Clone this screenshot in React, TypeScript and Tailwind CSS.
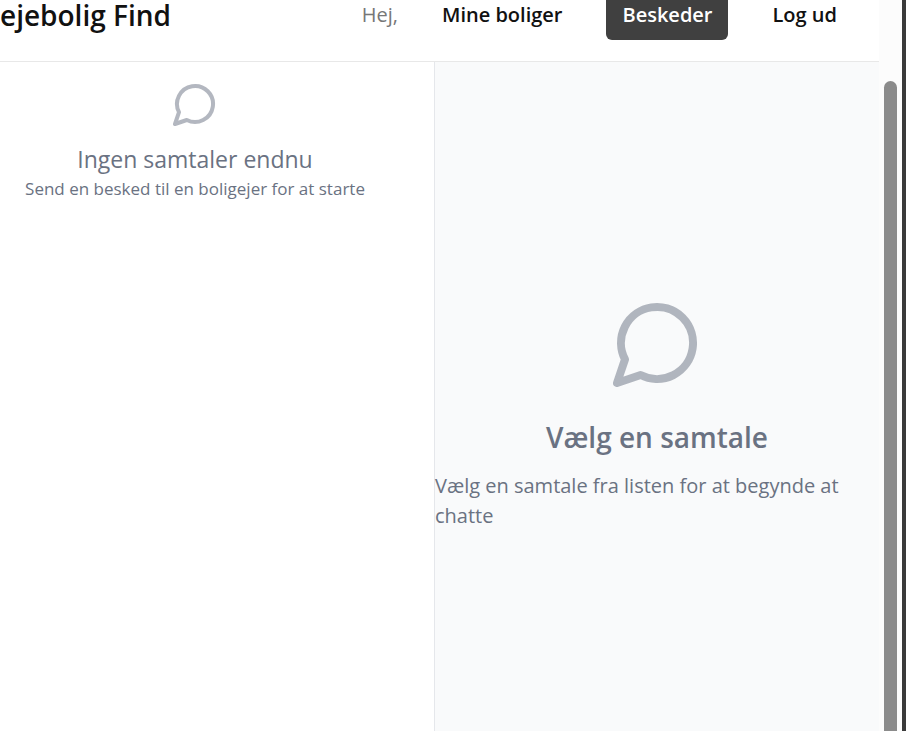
import React from "react";

function MessageIcon({ className }: { className: string }) {
  return (
    <svg viewBox="0 0 24 24" fill="none" stroke="currentColor" strokeWidth="2" strokeLinecap="round" strokeLinejoin="round" className={className} aria-hidden="true">
      <path d="M7.9 20A9 9 0 1 0 4 16.1L2 22Z" />
    </svg>
  );
}

export default function App() {
  return (
    <div className="flex h-screen overflow-hidden bg-white font-['Segoe_UI','Open_Sans',sans-serif] text-[#111]">
      <div className="flex min-w-0 flex-1 flex-col">
        <header className="flex h-[62px] shrink-0 items-start justify-between border-b border-[#e8e8e8] pr-6">
          <h1 className="text-[28px] leading-[30px] font-semibold whitespace-nowrap">ejebolig Find</h1>
          <nav className="flex items-start gap-[26px] text-[20px] leading-[30px] font-semibold whitespace-nowrap">
            <span className="font-normal text-[#777]">Hej,</span>
            <button type="button" className="px-[18px]">Mine boliger</button>
            <button type="button" className="h-10 rounded-b-md bg-[#404040] px-4 pb-[10px] text-white">Beskeder</button>
            <button type="button" className="px-[18px]">Log ud</button>
          </nav>
        </header>
        <main className="flex min-h-0 flex-1">
          <aside className="flex w-[435px] shrink-0 flex-col border-r border-gray-200 pr-11 pt-[18px] text-center text-gray-500">
            <MessageIcon className="mx-auto mb-4 size-12 shrink-0 opacity-50" />
            <p className="text-[23px] leading-[30px]">Ingen samtaler endnu</p>
            <p className="text-[17px] leading-[30px]">Send en besked til en boligejer for at starte</p>
          </aside>
          <section className="flex min-w-0 flex-1 flex-col items-center bg-gray-50 pt-[233px] text-gray-500">
            <MessageIcon className="mb-[26px] size-24 shrink-0 opacity-50" />
            <h2 className="text-[28px] leading-10 font-semibold">Vælg en samtale</h2>
            <p className="mt-[14px] w-full text-[20px] leading-[30px]">Vælg en samtale fra listen for at begynde at chatte</p>
          </section>
        </main>
      </div>
      <div className="flex w-[23px] shrink-0 justify-center bg-[#fcfcfc] pt-[81px]" aria-hidden="true">
        <div className="w-[13px] rounded-t-full bg-[#8b8b8b]" />
      </div>
      <div className="w-1 shrink-0 bg-[#3a3a3a]" aria-hidden="true" />
    </div>
  );
}
